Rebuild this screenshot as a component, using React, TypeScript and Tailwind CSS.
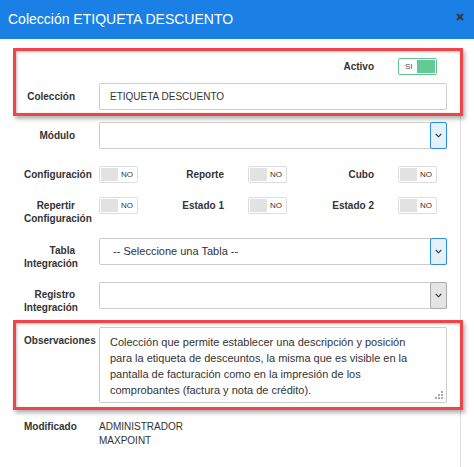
import React from "react";

const Label = ({ children, className = "" }: { children: React.ReactNode; className?: string }) => (
  <div
    className={`w-[51px] shrink-0 whitespace-nowrap text-right text-[10px] font-bold leading-[13px] text-[#333] ${className}`}
  >
    {children}
  </div>
);

const Toggle = ({ on = false }: { on?: boolean }) =>
  on ? (
    <div className="flex h-[17px] w-[39px] items-center rounded-[2px] border border-[#5fc491] bg-white p-[1px]">
      <span className="flex-1 pl-[5px] text-[8px] leading-none text-[#555]">SI</span>
      <span className="h-[13px] w-[18px] bg-[#63c995]" />
    </div>
  ) : (
    <div className="flex h-[17px] w-[39px] items-center rounded-[2px] border border-[#ddd] bg-white p-[1px]">
      <span className="h-[13px] w-[17px] bg-[#e2e2e2]" />
      <span className="flex-1 text-center text-[8px] leading-none text-[#333]">NO</span>
    </div>
  );

const Chevron = () => (
  <svg width="7" height="5" viewBox="0 0 7 5" fill="none">
    <path d="M0.8 1 L3.5 3.8 L6.2 1" stroke="#333" strokeWidth="1.1" />
  </svg>
);

const Select = ({ text = "", active = true }: { text?: string; active?: boolean }) => (
  <div className="flex h-[27px] w-[348px] items-center rounded-[2px] border border-[#ccc] bg-white">
    <span className="flex-1 pl-[13px] text-[11px] text-[#333]">{text}</span>
    <button
      type="button"
      className={`-my-px -mr-px flex h-[27px] w-[17px] items-center justify-center rounded-[2px] border ${
        active ? "border-[#2a8ae6] bg-[#e4f0fb]" : "border-[#aaa] bg-[#e4e4e4]"
      }`}
    >
      <Chevron />
    </button>
  </div>
);

const Group = ({ label, width, children }: { label: React.ReactNode; width: string; children: React.ReactNode }) => (
  <div className={`flex shrink-0 items-center ${width}`}>
    <Label>{label}</Label>
    <div className="ml-[24px]">{children}</div>
  </div>
);

const redBox =
  "-ml-[11px] w-[450px] border-[3px] border-[#ef4549] pl-[8px] shadow-[2px_3px_4px_rgba(0,0,0,0.3),inset_1px_1px_3px_rgba(0,0,0,0.25)]";

const obs =
  "Colección que permite establecer una descripción y posición\npara la etiqueta de desceuntos, la misma que es visible en la\npantalla de facturación como en la impresión de los\ncomprobantes (factura y nota de crédito).";

export default function App() {
  return (
    <div className="h-[467px] w-[474px] overflow-hidden bg-white font-['Liberation_Sans',Arial,sans-serif] text-[#333]">
      <div className="flex h-[39px] items-center justify-between bg-[#1b80e5] pl-[8px] pr-[10px]">
        <h1 className="text-[14px] text-white">Colección ETIQUETA DESCUENTO</h1>
        <svg width="8" height="8" viewBox="0 0 8 8" className="mt-[-5px]">
          <path d="M1 1 L7 7 M7 1 L1 7" stroke="#3a3a3a" strokeWidth="2.2" />
        </svg>
      </div>

      <div className="h-[426px] w-[461px] border-r border-[#ddd] pl-[24px]">
        <div className={`mt-[9px] pb-[3px] pt-[7px] ${redBox}`}>
          <div className="ml-[299px] flex h-[17px]">
            <Group label="Activo" width="w-[150px]">
              <Toggle on />
            </Group>
          </div>
          <div className="mt-[8px] flex items-center">
            <Label>Colección</Label>
            <div className="ml-[24px] flex h-[27px] w-[348px] items-center rounded-[2px] border border-[#ccc] bg-white pl-[10px] text-[10px] text-[#333]">
              ETIQUETA DESCUENTO
            </div>
          </div>
        </div>

        <div className="mt-[6px] flex items-center">
          <Label>Módulo</Label>
          <div className="ml-[24px]">
            <Select />
          </div>
        </div>

        <div className="mt-[17px] flex h-[17px]">
          <Group label="Configuración" width="w-[149px]">
            <Toggle />
          </Group>
          <Group label="Reporte" width="w-[150px]">
            <Toggle />
          </Group>
          <Group label="Cubo" width="w-[150px]">
            <Toggle />
          </Group>
        </div>

        <div className="mt-[14px] flex items-start">
          <div className="flex w-[149px] shrink-0 items-start">
            <Label className="pt-[2px]">
              Repertir
              <br />
              Configuración
            </Label>
            <div className="ml-[24px]">
              <Toggle />
            </div>
          </div>
          <Group label="Estado 1" width="w-[150px]">
            <Toggle />
          </Group>
          <Group label="Estado 2" width="w-[150px]">
            <Toggle />
          </Group>
        </div>

        <div className="mt-[13px] flex items-start">
          <Label className="pt-[6px]">
            Tabla
            <br />
            Integración
          </Label>
          <div className="ml-[24px]">
            <Select text="-- Seleccione una Tabla --" />
          </div>
        </div>

        <div className="mt-[12px] flex items-start">
          <Label className="pt-[6px]">
            Registro
            <br />
            Integración
          </Label>
          <div className="ml-[24px]">
            <Select active={false} />
          </div>
        </div>

        <div className={`mt-[6px] flex items-start pb-[4px] pt-[4px] ${redBox}`}>
          <Label className="pt-[7px]">Observaciones</Label>
          <div className="relative ml-[24px]">
            <textarea
              readOnly
              wrap="off"
              value={obs}
              className="block h-[76px] w-[348px] resize-none overflow-hidden rounded-[2px] border border-[#ccc] bg-white pl-[10px] pt-[6px] text-[11px] leading-[16px] text-[#333] outline-none"
            />
            <svg width="10" height="9" viewBox="0 0 10 9" className="absolute bottom-[3px] right-[3px]">
              <g fill="#aaa">
                <rect x="7" y="0" width="2" height="2" />
                <rect x="4" y="3" width="2" height="2" />
                <rect x="7" y="3" width="2" height="2" />
                <rect x="1" y="6" width="2" height="2" />
                <rect x="4" y="6" width="2" height="2" />
                <rect x="7" y="6" width="2" height="2" />
              </g>
            </svg>
          </div>
        </div>

        <div className="mt-[10px] flex items-start">
          <Label className="leading-[14px]">Modificado</Label>
          <div className="ml-[24px] text-[10px] leading-[14px] text-[#333]">
            ADMINISTRADOR
            <br />
            MAXPOINT
          </div>
        </div>
      </div>
    </div>
  );
}
